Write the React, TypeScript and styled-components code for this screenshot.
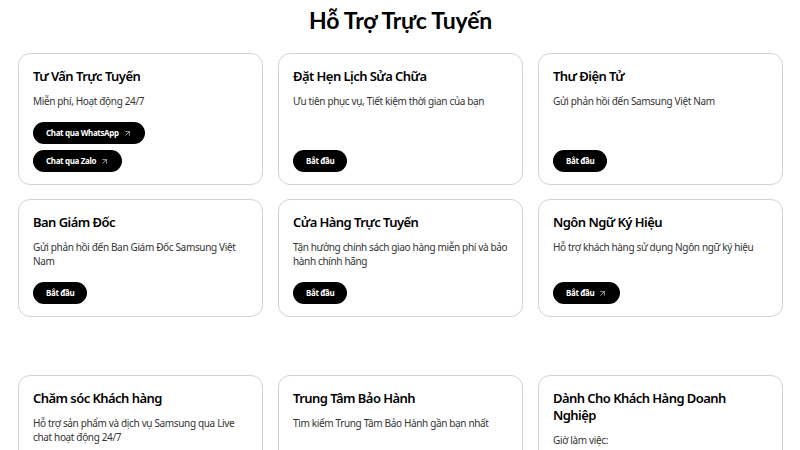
import * as React from 'react';
import styled, { createGlobalStyle } from 'styled-components';
import { ArrowUpRight } from 'lucide-react';

const GlobalStyle = createGlobalStyle`
    html, body {
        margin: 0;
        padding: 0;
        overflow: hidden;
        background: #fff;
    }
    * {
        box-sizing: border-box;
    }
`;

type Action = { label: string; external?: boolean };
type Service = { title: string; text: string; actions: Action[] };

const topServices: Service[] = [
    {
        title: 'Tư Vấn Trực Tuyến',
        text: 'Miễn phí, Hoạt động 24/7',
        actions: [
            { label: 'Chat qua WhatsApp', external: true },
            { label: 'Chat qua Zalo', external: true }
        ]
    },
    {
        title: 'Đặt Hẹn Lịch Sửa Chữa',
        text: 'Ưu tiên phục vụ, Tiết kiệm thời gian của bạn',
        actions: [{ label: 'Bắt đầu' }]
    },
    {
        title: 'Thư Điện Tử',
        text: 'Gửi phản hồi đến Samsung Việt Nam',
        actions: [{ label: 'Bắt đầu' }]
    },
    {
        title: 'Ban Giám Đốc',
        text: 'Gửi phản hồi đến Ban Giám Đốc Samsung Việt Nam',
        actions: [{ label: 'Bắt đầu' }]
    },
    {
        title: 'Cửa Hàng Trực Tuyến',
        text: 'Tận hưởng chính sách giao hàng miễn phí và bảo hành chính hãng',
        actions: [{ label: 'Bắt đầu' }]
    },
    {
        title: 'Ngôn Ngữ Ký Hiệu',
        text: 'Hỗ trợ khách hàng sử dụng Ngôn ngữ ký hiệu',
        actions: [{ label: 'Bắt đầu', external: true }]
    }
];

const bottomServices: Service[] = [
    {
        title: 'Chăm sóc Khách hàng',
        text: 'Hỗ trợ sản phẩm và dịch vụ Samsung qua Live chat hoạt động 24/7',
        actions: [{ label: 'Bắt đầu' }]
    },
    {
        title: 'Trung Tâm Bảo Hành',
        text: 'Tìm kiếm Trung Tâm Bảo Hành gần bạn nhất',
        actions: [{ label: 'Bắt đầu' }]
    },
    {
        title: 'Dành Cho Khách Hàng Doanh Nghiệp',
        text: 'Giờ làm việc:',
        actions: [{ label: 'Bắt đầu' }]
    }
];

const Page = styled.main`
    padding: 6px 17px 0 18px;
    font-family: 'Noto Sans', 'Open Sans', sans-serif;
    color: #000;
`;

const Heading = styled.h1`
    margin: 0 0 19px;
    text-align: center;
    font-family: Lato, 'Noto Sans', sans-serif;
    font-size: 23px;
    line-height: 28px;
    font-weight: 700;
    letter-spacing: -0.2px;
`;

const Grid = styled.section<{ $spaced?: boolean }>`
    display: grid;
    grid-template-columns: repeat(3, 245px);
    gap: 14px 15px;
    margin-top: ${({ $spaced }) => ($spaced ? '58px' : '0')};
`;

const Card = styled.article`
    display: flex;
    flex-direction: column;
    padding: 14px 14px 12px;
    border: 1px solid #d2d2d2;
    border-radius: 12px;
    background: #fff;
`;

const Title = styled.h3`
    margin: 0 0 9px;
    font-size: 13px;
    line-height: 17px;
    font-weight: 600;
    letter-spacing: -0.55px;
`;

const Text = styled.p`
    margin: 0;
    font-size: 10px;
    line-height: 14px;
    color: #333;
    letter-spacing: -0.35px;
`;

const Actions = styled.div`
    display: flex;
    flex-direction: column;
    align-items: flex-start;
    gap: 6px;
    margin-top: auto;
    padding-top: 14px;
`;

const PillButton = styled.button`
    display: inline-flex;
    align-items: center;
    gap: 4px;
    height: 22px;
    padding: 0 13px;
    border: none;
    border-radius: 11px;
    background: #000;
    color: #fff;
    font-family: 'Noto Sans', sans-serif;
    font-size: 8px;
    line-height: 1;
    font-weight: 700;
    letter-spacing: -0.35px;
    cursor: pointer;
`;

const ServiceCard = ({ service }: { service: Service }) => (
    <Card>
        <Title>{service.title}</Title>
        <Text>{service.text}</Text>
        <Actions>
            {service.actions.map(action => (
                <PillButton key={action.label}>
                    {action.label}
                    {action.external && <ArrowUpRight size={9} strokeWidth={1.6} />}
                </PillButton>
            ))}
        </Actions>
    </Card>
);

const App = () => (
    <>
        <GlobalStyle />
        <Page>
            <Heading>Hỗ Trợ Trực Tuyến</Heading>
            <Grid>
                {topServices.map(s => (
                    <ServiceCard key={s.title} service={s} />
                ))}
            </Grid>
            <Grid $spaced>
                {bottomServices.map(s => (
                    <ServiceCard key={s.title} service={s} />
                ))}
            </Grid>
        </Page>
    </>
);

export default App;
